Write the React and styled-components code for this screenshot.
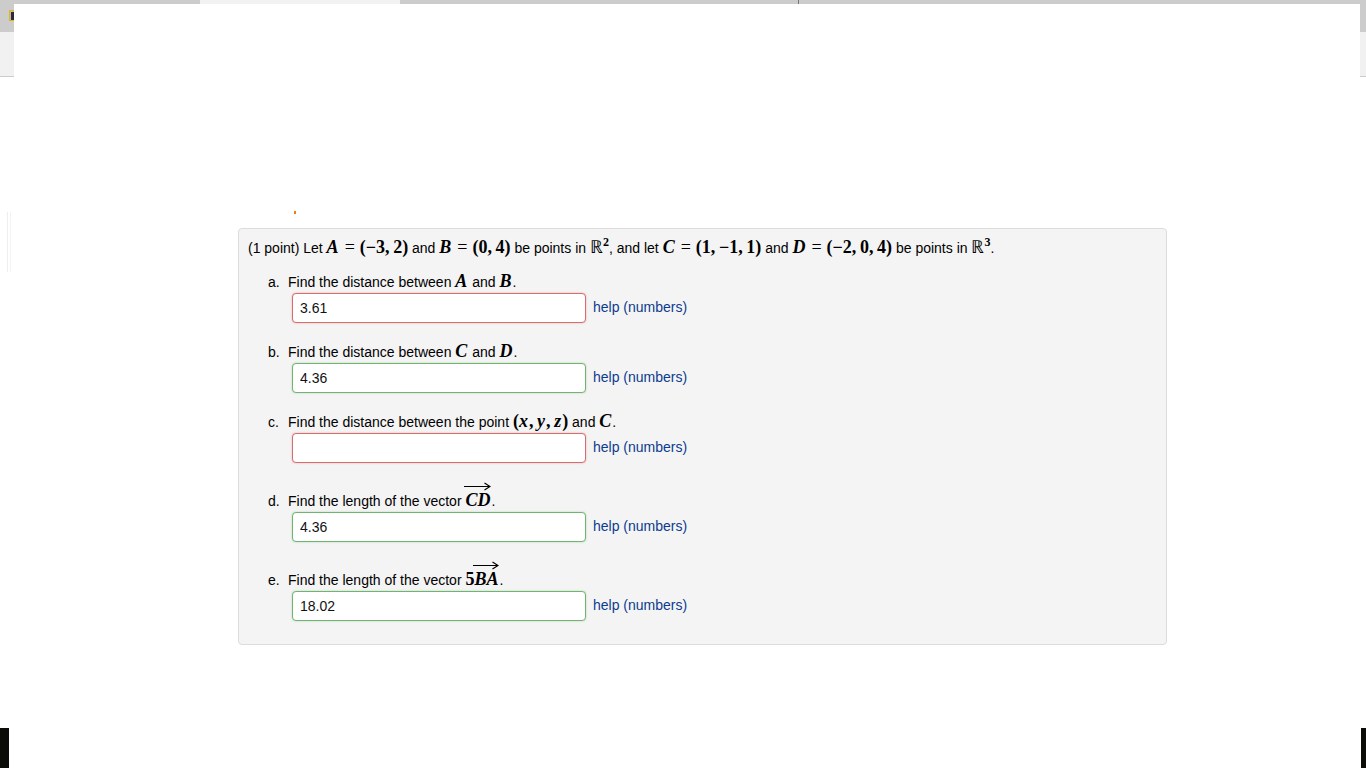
import React from 'react';
import styled, { createGlobalStyle } from 'styled-components';

const GlobalStyle = createGlobalStyle`
  html, body {
    margin: 0;
    padding: 0;
    background: #ffffff;
    overflow: hidden;
  }
  body {
    font-family: "Liberation Sans", Arial, sans-serif;
    font-size: 14px;
    color: #000;
  }
`;

const Frame = styled.div`
  display: flex;
  flex-direction: column;
  width: 1366px;
  height: 768px;
`;

const TopStrip = styled.div`
  display: flex;
  height: 4px;
  flex: none;
  background: #cccccc;
`;

const StripSegment = styled.div`
  width: ${(p) => p.w}px;
  background: ${(p) => p.color || '#cccccc'};
  border-right: ${(p) => (p.tick ? '1px solid #777' : 'none')};
`;

const Body = styled.div`
  flex: 1;
  display: grid;
  grid-template-columns: 14px 1fr 6px;
  min-height: 0;
`;

const Side = styled.div`
  display: flex;
  flex-direction: column;
  align-items: ${(p) => (p.right ? 'flex-end' : 'flex-start')};
`;

const SideHead = styled.div`
  align-self: stretch;
  height: 28px;
  background: #cccccc;
  display: flex;
  align-items: flex-start;
  justify-content: flex-end;
`;

const SideIcon = styled.div`
  width: 4px;
  height: 9px;
  margin-top: 6px;
  border: 1px solid #e2b51c;
  border-right: none;
  border-radius: 1px 0 0 1px;
  background: #2c2c2c;
  box-shadow: inset 1px 1px 0 #bbb;
`;

const SideSub = styled.div`
  align-self: stretch;
  height: 44px;
  background: #f1f1f1;
  border-bottom: 1px solid #cccccc;
`;

const SideRule = styled.div`
  width: 2px;
  height: 60px;
  margin: 135px 0 0 7px;
  border-left: 1px solid #eeeeee;
  border-right: 1px solid #f3f3f3;
`;

const SideBlock = styled.div`
  margin-top: auto;
  width: ${(p) => p.w}px;
  height: 40px;
  background: #0b0b08;
`;

const Main = styled.main`
  padding-top: 207px;
  padding-left: 224px;
`;

const Mark = styled.div`
  width: 2px;
  height: 3px;
  margin-left: 56px;
  background: #f07b1a;
`;

const ProblemBox = styled.section`
  margin-top: 14px;
  width: 909px;
  padding: 9px 9px 23px 9px;
  box-sizing: content-box;
  background: #f4f4f4;
  border: 1px solid #dcdcdc;
  border-radius: 4px;
  line-height: 20px;
`;

const Intro = styled.p`
  margin: 0 0 14px 0;
`;

const Parts = styled.ol`
  list-style: none;
  counter-reset: part;
  margin: 0;
  padding-left: 40px;
`;

const Part = styled.li`
  counter-increment: part;
  margin-bottom: 19px;
  &:last-child {
    margin-bottom: 0;
  }
`;

const Label = styled.div`
  &::before {
    content: counter(part, lower-alpha) '.';
    display: inline-block;
    width: 20px;
    margin-left: -20px;
  }
`;

const AnswerRow = styled.div`
  display: flex;
  align-items: center;
  margin: 1px 0 0 4px;
`;

const Answer = styled.input`
  box-sizing: border-box;
  width: 294px;
  height: 30px;
  padding: 0 7px;
  font-family: "Liberation Sans", Arial, sans-serif;
  font-size: 14px;
  color: #111;
  background: #fff;
  border: 1px solid ${(p) => (p.status === 'correct' ? '#6fb56f' : '#d86c6c')};
  border-radius: 4px;
  box-shadow: 0 0 2px
    ${(p) => (p.status === 'correct' ? 'rgba(90,170,90,0.45)' : 'rgba(210,80,80,0.45)')};
  outline: none;
`;

const Help = styled.a`
  margin: 0 0 2px 7px;
  color: #0d3b8e;
  text-decoration: none;
`;

const M = styled.span`
  font-family: "Liberation Serif", "Times New Roman", serif;
  font-size: 18px;
  line-height: 0;
  font-weight: bold;
  white-space: nowrap;
`;

const V = styled.i`
  font-style: italic;
  padding-right: 1px;
`;

const Op = styled.span`
  margin: 0 5px;
  font-weight: normal;
`;

const Reals = styled.span`
  font-weight: normal;
`;

const Sup = styled.sup`
  font-size: 12px;
  font-weight: bold;
  line-height: 0;
  vertical-align: 7px;
`;

const VecWrap = styled.span`
  display: inline-block;
  vertical-align: baseline;
  line-height: 18px;
`;

const VecArrow = styled.span`
  display: flex;
  align-items: center;
  height: 9px;
  margin-left: -1px;
`;

const VecShaft = styled.span`
  flex: 1;
  height: 1.3px;
  background: #000;
  margin-right: -6px;
`;

const Vec = ({ children }) => (
  <VecWrap>
    <VecArrow>
      <VecShaft />
      <svg width="7" height="9" viewBox="0 0 7 9">
        <path d="M0.5 1L6 4.5L0.5 8" stroke="#000" strokeWidth="1.2" fill="none" />
      </svg>
    </VecArrow>
    <V>{children}</V>
  </VecWrap>
);

const parts = [
  {
    id: 'a',
    label: (
      <>
        Find the distance between <M><V>A</V></M> and <M><V>B</V></M>.
      </>
    ),
    value: '3.61',
    status: 'incorrect',
  },
  {
    id: 'b',
    label: (
      <>
        Find the distance between <M><V>C</V></M> and <M><V>D</V></M>.
      </>
    ),
    value: '4.36',
    status: 'correct',
  },
  {
    id: 'c',
    label: (
      <>
        Find the distance between the point{' '}
        <M>
          (<V>x</V>,&thinsp;<V>y</V>,&thinsp;<V>z</V>)
        </M>{' '}
        and <M><V>C</V></M>.
      </>
    ),
    value: '',
    status: 'incorrect',
  },
  {
    id: 'd',
    label: (
      <>
        Find the length of the vector <M><Vec>CD</Vec></M>.
      </>
    ),
    value: '4.36',
    status: 'correct',
  },
  {
    id: 'e',
    label: (
      <>
        Find the length of the vector <M>5<Vec>BA</Vec></M>.
      </>
    ),
    value: '18.02',
    status: 'correct',
  },
];

const App = () => {
  return (
    <Frame>
      <GlobalStyle />
      <TopStrip>
        <StripSegment w={200} />
        <StripSegment w={200} color="#f2f2f2" />
        <StripSegment w={398} tick />
      </TopStrip>
      <Body>
        <Side>
          <SideHead>
            <SideIcon />
          </SideHead>
          <SideSub />
          <SideRule />
          <SideBlock w={9} />
        </Side>
        <Main>
          <Mark />
          <ProblemBox>
            <Intro>
              (1 point) Let <M><V>A</V><Op>=</Op>(−3,&thinsp;2)</M> and{' '}
              <M><V>B</V><Op>=</Op>(0,&thinsp;4)</M> be points in{' '}
              <M><Reals>ℝ</Reals><Sup>2</Sup></M>, and let{' '}
              <M><V>C</V><Op>=</Op>(1,&thinsp;−1,&thinsp;1)</M> and{' '}
              <M><V>D</V><Op>=</Op>(−2,&thinsp;0,&thinsp;4)</M> be points in{' '}
              <M><Reals>ℝ</Reals><Sup>3</Sup></M>.
            </Intro>
            <Parts>
              {parts.map((p) => (
                <Part key={p.id}>
                  <Label>{p.label}</Label>
                  <AnswerRow>
                    <Answer
                      type="text"
                      defaultValue={p.value}
                      status={p.status}
                      aria-label={`answer ${p.id}`}
                    />
                    <Help href="#">help (numbers)</Help>
                  </AnswerRow>
                </Part>
              ))}
            </Parts>
          </ProblemBox>
        </Main>
        <Side right>
          <SideHead />
          <SideSub />
          <SideBlock w={5} />
        </Side>
      </Body>
    </Frame>
  );
};

export default App;
